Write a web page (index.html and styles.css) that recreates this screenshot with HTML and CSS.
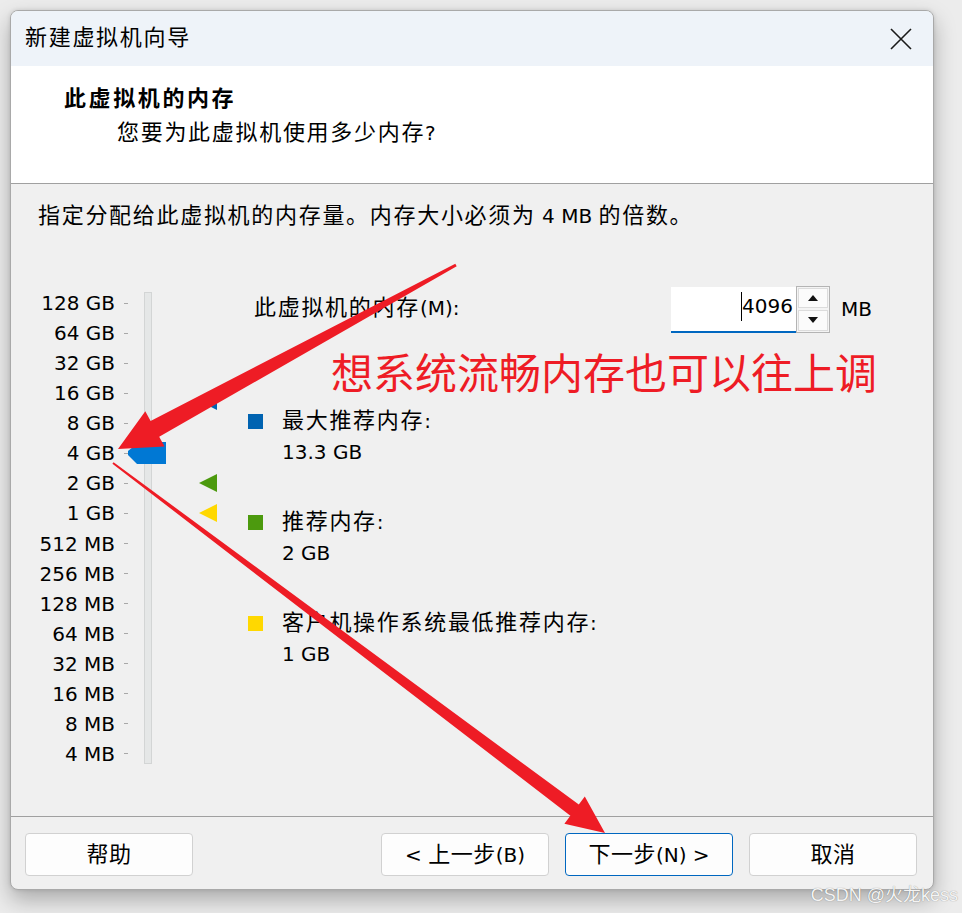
FILE: index.html
```html
<!DOCTYPE html>
<html lang="zh-CN">

<head>
    <meta charset="UTF-8">
    <meta name="viewport" content="width=device-width, initial-scale=1.0">
    <title>新建虚拟机向导</title>
    <link rel="stylesheet" href="styles.css">
</head>

<body>
    <div class="window">
        <div class="titlebar">
            <span class="cjk">新建虚拟机向导</span>
            <svg class="close" width="24" height="24" viewBox="0 0 24 24">
                <path d="M2 2 L22 22 M22 2 L2 22" stroke="#1a1a1a" stroke-width="1.6" fill="none" />
            </svg>
        </div>

        <div class="header">
            <div class="headline cjk">此虚拟机的内存</div>
            <div class="subline"><span class="cjk">您要为此虚拟机使用多少内存</span>?</div>
        </div>

        <div class="content">
            <div class="intro"><span class="cjk">指定分配给此虚拟机的内存量。内存大小必须为</span> 4 MB <span class="cjk">的倍数。</span></div>

            <div class="main">
                <div class="scale">
                    <div class="track"></div>
                    <svg class="thumb" width="38" height="22" viewBox="0 0 38 22">
                        <polygon points="38,0 11,0 0,9 0,13 9,22 38,22" fill="#0078d4" />
                    </svg>
                    <svg class="marker marker-max" width="18" height="18" viewBox="0 0 18 18">
                        <polygon points="18,0 0,9 18,18" fill="#0063b1" />
                    </svg>
                    <svg class="marker marker-rec" width="18" height="18" viewBox="0 0 18 18">
                        <polygon points="18,0 0,9 18,18" fill="#4c9a0e" />
                    </svg>
                    <svg class="marker marker-min" width="18" height="18" viewBox="0 0 18 18">
                        <polygon points="18,0 0,9 18,18" fill="#ffd800" />
                    </svg>
                    <ul class="labels">
                        <li><span>128 GB</span><i></i></li>
                        <li><span>64 GB</span><i></i></li>
                        <li><span>32 GB</span><i></i></li>
                        <li><span>16 GB</span><i></i></li>
                        <li><span>8 GB</span><i></i></li>
                        <li><span>4 GB</span><i></i></li>
                        <li><span>2 GB</span><i></i></li>
                        <li><span>1 GB</span><i></i></li>
                        <li><span>512 MB</span><i></i></li>
                        <li><span>256 MB</span><i></i></li>
                        <li><span>128 MB</span><i></i></li>
                        <li><span>64 MB</span><i></i></li>
                        <li><span>32 MB</span><i></i></li>
                        <li><span>16 MB</span><i></i></li>
                        <li><span>8 MB</span><i></i></li>
                        <li><span>4 MB</span><i></i></li>
                    </ul>
                </div>

                <div class="settings">
                    <div class="mem-row">
                        <label class="mem-label"><span class="cjk">此虚拟机的内存</span>(M):</label>
                        <div class="mem-input"><b class="caret"></b>4096</div>
                        <div class="spin">
                            <div class="spin-btn">
                                <svg width="10" height="6" viewBox="0 0 10 6"><polygon points="5,0 10,6 0,6" fill="#111" /></svg>
                            </div>
                            <div class="spin-btn">
                                <svg width="10" height="6" viewBox="0 0 10 6"><polygon points="0,0 10,0 5,6" fill="#111" /></svg>
                            </div>
                        </div>
                        <span class="unit">MB</span>
                    </div>

                    <div class="legend">
                        <div class="legend-item">
                            <span class="swatch swatch-max"></span>
                            <div class="legend-text">
                                <div><span class="cjk">最大推荐内存</span>:</div>
                                <div>13.3 GB</div>
                            </div>
                        </div>
                        <div class="legend-item">
                            <span class="swatch swatch-rec"></span>
                            <div class="legend-text">
                                <div><span class="cjk">推荐内存</span>:</div>
                                <div>2 GB</div>
                            </div>
                        </div>
                        <div class="legend-item">
                            <span class="swatch swatch-min"></span>
                            <div class="legend-text">
                                <div><span class="cjk">客户机操作系统最低推荐内存</span>:</div>
                                <div>1 GB</div>
                            </div>
                        </div>
                    </div>
                </div>
            </div>
        </div>

        <div class="footer">
            <button class="btn"><span class="cjk">帮助</span></button>
            <button class="btn btn-back">&lt; <span class="cjk">上一步</span>(B)</button>
            <button class="btn btn-next"><span class="cjk">下一步</span>(N) &gt;</button>
            <button class="btn"><span class="cjk">取消</span></button>
        </div>
    </div>

    <!-- annotations drawn over the screenshot -->
    <div class="note">想系统流畅内存也可以往上调</div>

    <svg class="arrows" width="962" height="913" viewBox="0 0 962 913">
        <polygon fill="#ee1c25"
            points="118,449 145.3,411.3 150.6,421 455.3,263.7 456.7,266.3 159.2,436.8 164.5,446.5" />
        <polygon fill="#ee1c25"
            points="605,833 564.4,823.8 570.4,815.8 112.4,463.8 113.6,462.2 578.8,804.6 584.8,796.6" />
    </svg>

    <div class="watermark">CSDN @火龙kess</div>
</body>

</html>
```

FILE: styles.css
```css
body {
    margin: 0;
    width: 962px;
    height: 913px;
    overflow: hidden;
    position: relative;
    background: #ececec;
    font-family: "DejaVu Sans", "Noto Sans CJK SC", sans-serif;
    font-size: 20px;
    color: #000;
}

.cjk {
    font-family: "Noto Sans CJK SC", sans-serif;
    font-size: 22px;
    line-height: 20px;
    letter-spacing: 1.7px;
}

.window {
    box-sizing: border-box;
    width: 924px;
    height: 880px;
    margin: 10px 0 0 10px;
    border: 1px solid #a9a9a9;
    border-radius: 8px;
    overflow: hidden;
    display: flex;
    flex-direction: column;
    background: #f0f0f0;
    box-shadow: 0 10px 22px rgba(0, 0, 0, 0.28), 0 0 4px rgba(0, 0, 0, 0.12);
}

.titlebar {
    height: 55px;
    flex: none;
    box-sizing: border-box;
    display: flex;
    align-items: center;
    justify-content: space-between;
    padding: 0 20px 7px 14px;
    background: #eef3f9;
}

.close {
    margin-top: 7px;
}

.header {
    height: 118px;
    flex: none;
    box-sizing: border-box;
    padding: 15px 0 0 53px;
    background: #fff;
    border-bottom: 1px solid #a0a0a0;
    line-height: 30px;
}

.headline {
    font-weight: bold;
    line-height: 30px;
    letter-spacing: 2.6px;
}

.subline {
    margin: 7px 0 0 53px;
}

.content {
    flex: 1;
    padding: 17px 0 0 27px;
    line-height: 30px;
}

.main {
    display: flex;
    align-items: flex-start;
    margin-top: 55px;
}

.scale {
    position: relative;
    width: 210px;
    flex: none;
}

.track {
    position: absolute;
    left: 106px;
    top: 6px;
    width: 6px;
    height: 470px;
    background: #e5e7e7;
    border: 1px solid #d3d5d5;
}

.thumb {
    position: absolute;
    left: 90px;
    top: 156px;
}

.marker {
    position: absolute;
    left: 161px;
}

.marker-max {
    top: 106px;
}

.marker-rec {
    top: 188px;
}

.marker-min {
    top: 218px;
}

.labels {
    list-style: none;
    margin: 0;
    padding: 2px 0 0;
}

.labels li {
    display: flex;
    align-items: center;
    height: 30.07px;
}

.labels span {
    width: 77px;
    text-align: right;
}

.labels i {
    width: 4px;
    height: 1px;
    margin-left: 9px;
    background: #a8a8a8;
}

.settings {
    flex: 1;
}

.mem-row {
    display: flex;
    align-items: center;
    height: 46px;
}

.mem-label {
    box-sizing: border-box;
    width: 423px;
    padding: 0 0 2px 6px;
}

.mem-input {
    box-sizing: border-box;
    width: 125px;
    height: 46px;
    margin-top: 1px;
    padding: 0 3px 5px 0;
    display: flex;
    align-items: center;
    justify-content: flex-end;
    background: #fff;
    border-bottom: 2px solid #0067c0;
}

.caret {
    width: 1px;
    height: 29px;
    background: #000;
}

.spin {
    box-sizing: border-box;
    width: 34px;
    height: 47px;
    display: flex;
    flex-direction: column;
    border: 1px solid #b4b4b4;
    background: #f4f4f4;
}

.spin-btn {
    flex: 1;
    display: flex;
    align-items: center;
    justify-content: center;
    margin: 1px;
    background: #fbfbfb;
    border: 1px solid #dcdcdc;
}

.unit {
    margin-left: 11px;
}

.legend {
    margin-top: 74px;
    display: flex;
    flex-direction: column;
    gap: 39px;
}

.legend-item {
    display: flex;
    align-items: flex-start;
}

.swatch {
    width: 15px;
    height: 15px;
    margin: 8px 19px 0 0;
}

.swatch-max {
    background: #0063b1;
}

.swatch-rec {
    background: #4c9a0e;
}

.swatch-min {
    background: #ffd800;
}

.legend-text {
    line-height: 31px;
}

.legend-text div {
    height: 31px;
}

.footer {
    height: 73px;
    flex: none;
    box-sizing: border-box;
    display: flex;
    gap: 16px;
    padding: 16px 16px 0 14px;
    border-top: 1px solid #a0a0a0;
}

.btn {
    width: 168px;
    height: 43px;
    padding: 0;
    border: 1px solid #d1d1d1;
    border-radius: 4px;
    background: #fdfdfd;
    font-family: "DejaVu Sans", "Noto Sans CJK SC", sans-serif;
    font-size: 20px;
    color: #000;
}

.btn .cjk {
    letter-spacing: 0.5px;
}

.btn-back {
    margin-left: auto;
}

.btn-next {
    border-color: #0067c0;
}

.note {
    position: absolute;
    left: 331px;
    top: 342px;
    font-family: "Noto Sans CJK SC", sans-serif;
    font-size: 42px;
    line-height: 58px;
    color: #ee1c25;
    white-space: nowrap;
}

.arrows {
    position: absolute;
    left: 0;
    top: 0;
    pointer-events: none;
}

.watermark {
    position: absolute;
    right: 4px;
    bottom: 7px;
    font-family: "Liberation Sans", "Noto Sans CJK SC", sans-serif;
    font-size: 18px;
    color: #f4f4f4;
    text-shadow: 0 0 1px rgba(0, 0, 0, 0.45);
}
```
